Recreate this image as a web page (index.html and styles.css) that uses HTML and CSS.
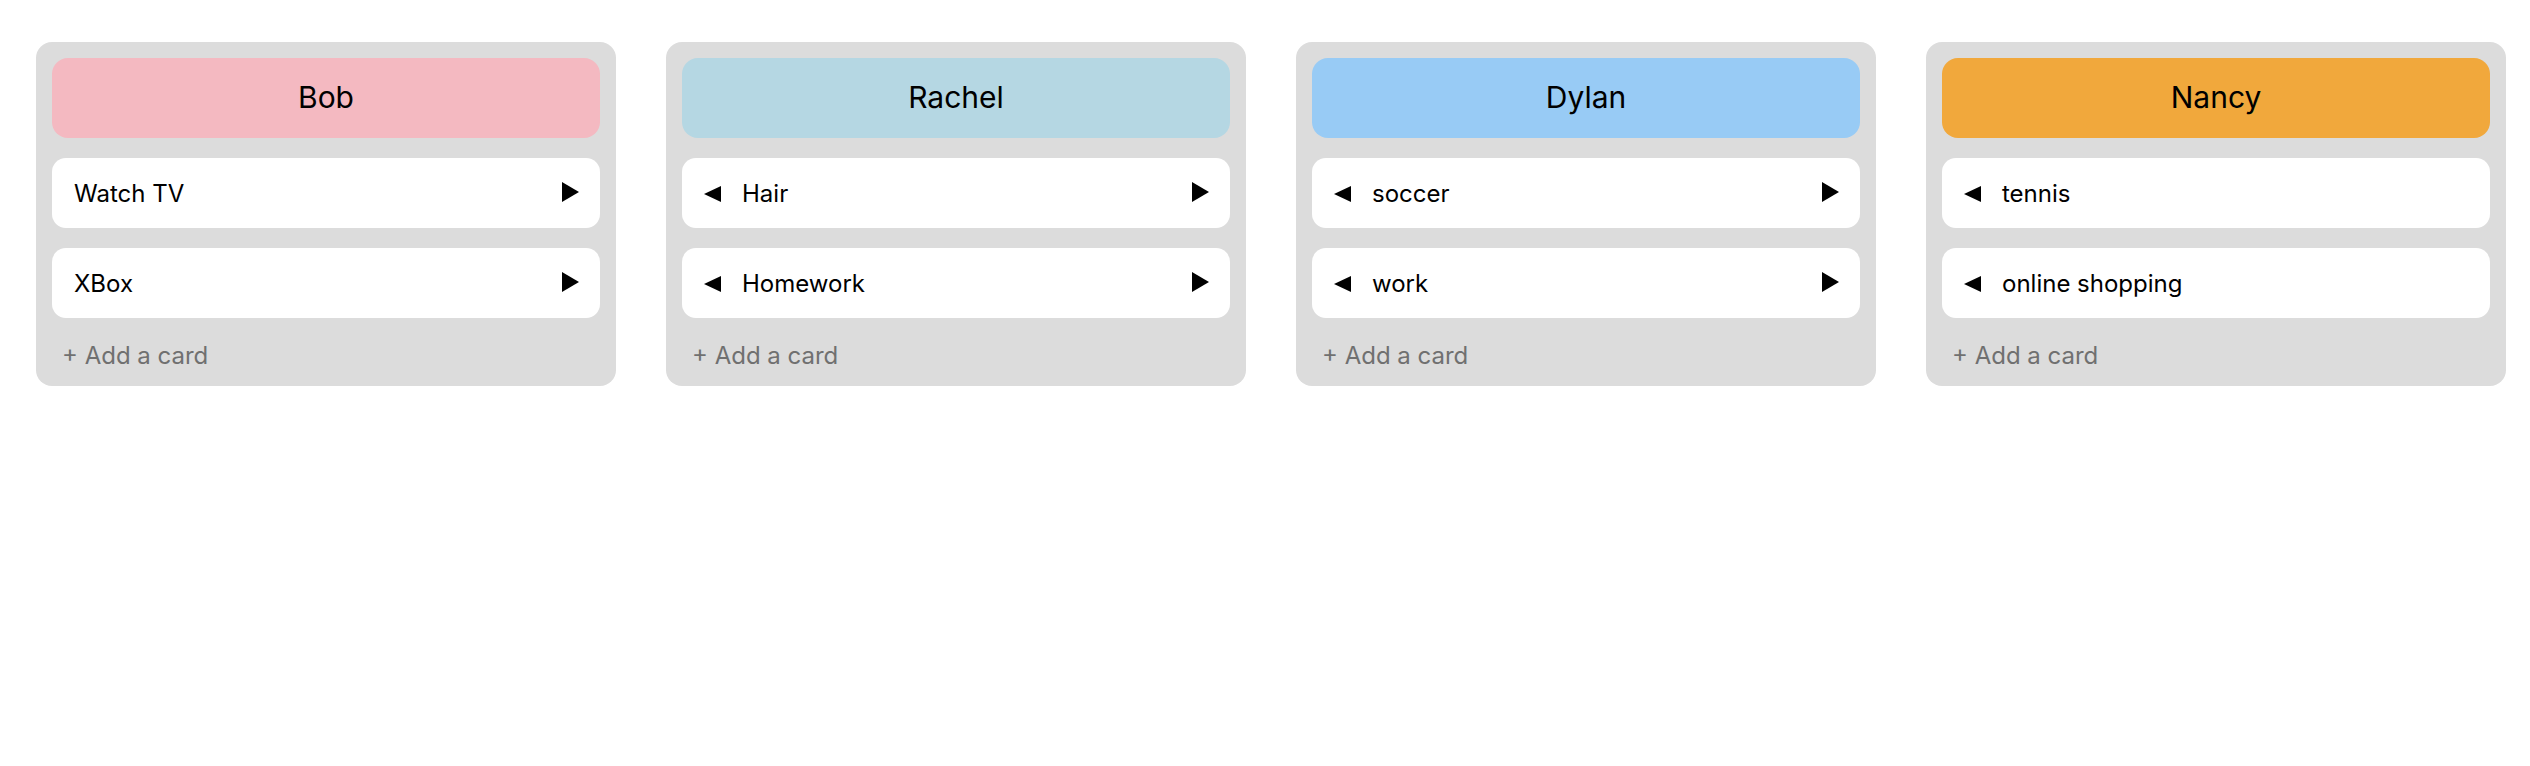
FILE: index.html
```html
<!DOCTYPE html>
<html lang="en">
<head>
<meta charset="utf-8">
<title>Board</title>
<link rel="stylesheet" href="styles.css">
</head>
<body>
<div class="board">
  <section class="column">
    <div class="col-header bob">Bob</div>
    <div class="card">
      <span class="card-text">Watch TV</span>
      <svg class="arrow-right" width="17" height="20" viewBox="0 0 17 20"><polygon points="0,0 17,10 0,20" fill="#000"/></svg>
    </div>
    <div class="card">
      <span class="card-text">XBox</span>
      <svg class="arrow-right" width="17" height="20" viewBox="0 0 17 20"><polygon points="0,0 17,10 0,20" fill="#000"/></svg>
    </div>
    <div class="add-card">+ Add a card</div>
  </section>

  <section class="column">
    <div class="col-header rachel">Rachel</div>
    <div class="card">
      <svg class="arrow-left" width="17" height="16" viewBox="0 0 17 16"><polygon points="17,0 0,8 17,16" fill="#000"/></svg>
      <span class="card-text">Hair</span>
      <svg class="arrow-right" width="17" height="20" viewBox="0 0 17 20"><polygon points="0,0 17,10 0,20" fill="#000"/></svg>
    </div>
    <div class="card">
      <svg class="arrow-left" width="17" height="16" viewBox="0 0 17 16"><polygon points="17,0 0,8 17,16" fill="#000"/></svg>
      <span class="card-text">Homework</span>
      <svg class="arrow-right" width="17" height="20" viewBox="0 0 17 20"><polygon points="0,0 17,10 0,20" fill="#000"/></svg>
    </div>
    <div class="add-card">+ Add a card</div>
  </section>

  <section class="column">
    <div class="col-header dylan">Dylan</div>
    <div class="card">
      <svg class="arrow-left" width="17" height="16" viewBox="0 0 17 16"><polygon points="17,0 0,8 17,16" fill="#000"/></svg>
      <span class="card-text">soccer</span>
      <svg class="arrow-right" width="17" height="20" viewBox="0 0 17 20"><polygon points="0,0 17,10 0,20" fill="#000"/></svg>
    </div>
    <div class="card">
      <svg class="arrow-left" width="17" height="16" viewBox="0 0 17 16"><polygon points="17,0 0,8 17,16" fill="#000"/></svg>
      <span class="card-text">work</span>
      <svg class="arrow-right" width="17" height="20" viewBox="0 0 17 20"><polygon points="0,0 17,10 0,20" fill="#000"/></svg>
    </div>
    <div class="add-card">+ Add a card</div>
  </section>

  <section class="column">
    <div class="col-header nancy">Nancy</div>
    <div class="card">
      <svg class="arrow-left" width="17" height="16" viewBox="0 0 17 16"><polygon points="17,0 0,8 17,16" fill="#000"/></svg>
      <span class="card-text">tennis</span>
    </div>
    <div class="card">
      <svg class="arrow-left" width="17" height="16" viewBox="0 0 17 16"><polygon points="17,0 0,8 17,16" fill="#000"/></svg>
      <span class="card-text">online shopping</span>
    </div>
    <div class="add-card">+ Add a card</div>
  </section>
</div>
</body>
</html>
```

FILE: styles.css
```css
html, body {
  margin: 0;
  padding: 0;
  background: #ffffff;
}

body {
  font-family: Inter, "Noto Sans", "Liberation Sans", sans-serif;
  color: #000;
}

.board {
  display: flex;
  align-items: flex-start;
  gap: 50px;
  padding: 42px 24px 0 36px;
}

.column {
  width: 580px;
  box-sizing: border-box;
  background: #dcdcdc;
  border-radius: 16px;
  padding: 16px;
  display: flex;
  flex-direction: column;
  gap: 20px;
}

.col-header {
  height: 80px;
  box-sizing: border-box;
  padding-bottom: 3px;
  border-radius: 16px;
  display: flex;
  align-items: center;
  justify-content: center;
  font-size: 30px;
}

.bob { background: #f4b9c1; }
.rachel { background: #b5d7e3; }
.dylan { background: #98cbf5; }
.nancy { background: #f1a83c; }

.card {
  height: 70px;
  box-sizing: border-box;
  background: #ffffff;
  border-radius: 14px;
  padding: 0 21px 0 22px;
  display: flex;
  align-items: center;
  font-size: 24px;
}

.card-text {
  flex: 1;
}

.arrow-left {
  flex: none;
  margin-right: 21px;
  margin-top: 2px;
}

.arrow-right {
  flex: none;
  margin-top: -2px;
}

.add-card {
  font-size: 24px;
  line-height: 29px;
  padding-top: 3px;
  color: #707070;
  padding-left: 10px;
}
```
